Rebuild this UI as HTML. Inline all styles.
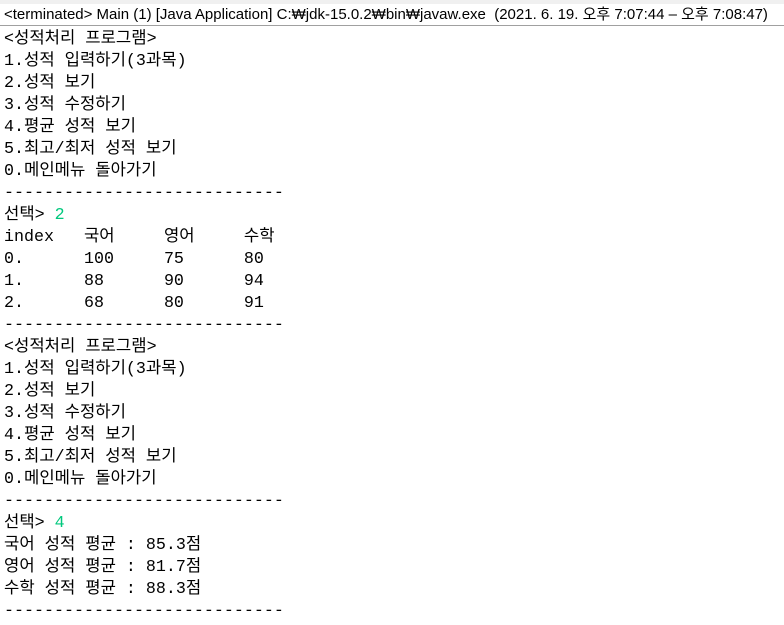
<!DOCTYPE html><html><head><meta charset="utf-8"><style>
body{margin:0;width:784px;height:625px;background:#fff;overflow:hidden;position:relative}
.strip{position:absolute;top:0;left:0;width:784px;height:4px;background:#f0f0f0}
.hdr{position:absolute;top:5px;left:0;width:784px;height:20px;border-bottom:1px solid #a0a0a0;font:15px "Liberation Sans","Noto Sans CJK KR",sans-serif;line-height:20px;padding-left:4px;white-space:pre;color:#000}
pre{position:absolute;top:29px;left:4px;margin:0;font:16.67px "Liberation Mono","Noto Sans CJK KR",monospace;line-height:22px;color:#000;tab-size:8}
.g{color:#00c87d}
</style></head><body><div class="strip"></div>
<div class="hdr">&lt;terminated&gt; Main (1) [Java Application] C:₩jdk-15.0.2₩bin₩javaw.exe  (2021. 6. 19. 오후 7:07:44 – 오후 7:08:47)</div>
<pre>&lt;성적처리 프로그램&gt;
1.성적 입력하기(3과목)
2.성적 보기
3.성적 수정하기
4.평균 성적 보기
5.최고/최저 성적 보기
0.메인메뉴 돌아가기
----------------------------
선택&gt; <span class="g">2</span>
index	국어	영어	수학
0.	100	75	80
1.	88	90	94
2.	68	80	91
----------------------------
&lt;성적처리 프로그램&gt;
1.성적 입력하기(3과목)
2.성적 보기
3.성적 수정하기
4.평균 성적 보기
5.최고/최저 성적 보기
0.메인메뉴 돌아가기
----------------------------
선택&gt; <span class="g">4</span>
국어 성적 평균 : 85.3점
영어 성적 평균 : 81.7점
수학 성적 평균 : 88.3점
----------------------------</pre>
</body></html>
